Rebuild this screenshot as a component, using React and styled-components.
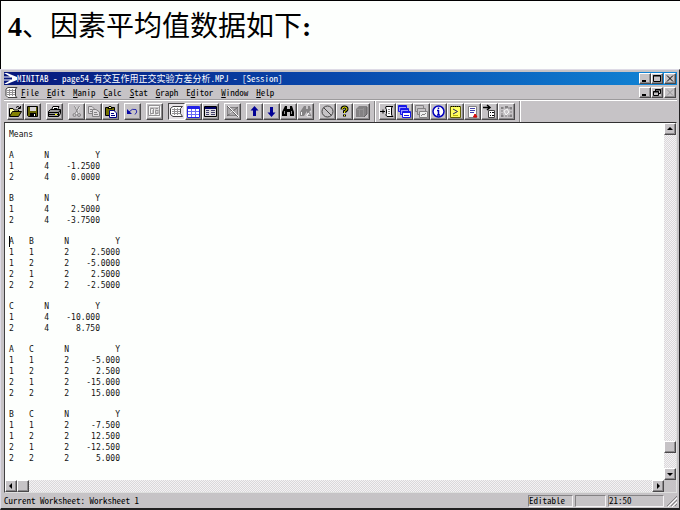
import React from "react";
import styled, { createGlobalStyle, css } from "styled-components";

const GlobalStyle = createGlobalStyle`
    * {
        box-sizing: border-box;
    }
    body {
        margin: 0;
        background: #fdfffd;
    }
    button {
        font: inherit;
        color: inherit;
        padding: 0;
        border: 0;
        background: none;
    }
`;

const raised = css`
    border: 1px solid;
    border-color: #fff #4a484a #4a484a #fff;
    box-shadow: inset -1px -1px 0 #8c8a8c;
`;

const sunken = css`
    border: 1px solid;
    border-color: #848284 #f4f2f4 #f4f2f4 #848284;
`;

// Page and heading styles
const Page = styled.div`
    display: flex;
    flex-direction: column;
    min-height: 100vh;
    border-top: 1px solid #000;
`;

const Heading = styled.h1`
    margin: 0;
    height: 68px;
    padding: 8px 7px;
    border-left: 1px solid #000;
    font-family: "Liberation Serif", "Noto Sans CJK SC", serif;
    font-size: 28px;
    font-weight: 400;
    line-height: 36px;
    color: #000;
    white-space: nowrap;
`;

// Window styles
const Window = styled.div`
    flex: 1;
    display: flex;
    flex-direction: column;
    padding: 2px 2px 1px 3px;
    background: #c6c3c6;
    border: 1px solid;
    border-color: #dedbe6 #212021 #212021 #dedbe6;
    border-bottom-width: 2px;
    font-family: "Noto Sans CJK SC", sans-serif;
    font-feature-settings: "hwid";
    font-size: 9px;
    line-height: 12px;
    color: #000;
`;

const TitleBar = styled.header`
    display: flex;
    align-items: center;
    height: 13px;
    padding-right: 1px;
    background: linear-gradient(90deg, #08187b, #0849ad 50%, #1086d6);
    color: #fff;
`;

const TitleText = styled.span`
    flex: 1;
    white-space: nowrap;
`;

const Controls = styled.div`
    display: flex;
    margin-left: auto;
`;

const ControlButton = styled.button`
    ${raised}
    display: flex;
    width: 12px;
    height: 11px;
    background: #c6c3c6;
    &:last-child {
        margin-left: 1px;
    }
`;

const MenuBar = styled.nav`
    display: flex;
    align-items: center;
    height: 15px;
    padding-right: 1px;
    padding-left: 1px;
`;

const MenuItem = styled.button`
    margin-left: 8px;
    &:first-of-type {
        margin-left: 3px;
    }
`;

const ToolBar = styled.div`
    display: flex;
    height: 22px;
    padding: 2px 0 0 3px;
    border-top: 1px solid #fff;
    box-shadow: 0 -1px 0 #9c9a9c;
`;

const ToolGroup = styled.div`
    display: flex;
    margin-right: 5px;
`;

const ToolButton = styled.button`
    ${raised}
    display: flex;
    width: 17px;
    height: 17px;
    background: ${({ $pressed }) => ($pressed ? "#e7e3e7" : "#c6c3c6")};
    ${({ $pressed }) => $pressed && css`
        border-color: #4a484a #fff #fff #4a484a;
        box-shadow: none;
    `}
`;

const Divider = styled.span`
    width: 2px;
    margin: -2px 3px 0 -1px;
    border-left: 1px solid #848284;
    border-right: 1px solid #fff;
`;

// Session styles
const Client = styled.div`
    flex: 1;
    display: grid;
    grid-template-columns: 1fr 12px;
    grid-template-rows: 1fr 12px;
    border: 1px solid;
    border-color: #313031 #dedfde #dedfde #424142;
`;

const Session = styled.main`
    padding: 6px 4px 0;
    background: #fdfffd;
    font-family: "DejaVu Sans Mono", monospace;
    font-feature-settings: normal;
    font-size: 8px;
    line-height: 11px;
    color: #101010;
`;

const SessionTitle = styled.h2`
    margin: 0;
    font-size: inherit;
    font-weight: 400;
`;

const MeansTable = styled.table`
    position: relative;
    margin-top: 10px;
    border-collapse: collapse;
    table-layout: fixed;
    width: ${({ $factors }) => $factors * 20 + 71}px;
`;

const Cell = styled.td`
    width: ${({ $wide }) => ($wide ? 51 : 20)}px;
    height: 11px;
    padding: 0;
    font-weight: 400;
    text-align: ${({ $right }) => ($right ? "right" : "left")};
`;

const Caret = styled.span`
    position: absolute;
    top: 0;
    left: 0;
    width: 1px;
    height: 11px;
    background: #000;
`;

// Scroll bar styles
const ScrollBar = styled.div`
    display: flex;
    flex-direction: ${({ $vertical }) => ($vertical ? "column" : "row")};
    background: repeating-conic-gradient(#f4f2f4 0 25%, #dad8da 0 50%) 0 0 / 2px 2px;
`;

const ScrollButton = styled.button`
    ${raised}
    display: flex;
    width: 12px;
    height: 12px;
    background: #c6c3c6;
`;

const Thumb = styled.div`
    ${raised}
    width: 12px;
    height: 12px;
    background: #c6c3c6;
`;

const Track = styled.div`
    flex: ${({ $grow }) => $grow};
`;

const StatusBar = styled.footer`
    display: flex;
    align-items: center;
    height: 14px;
    padding-top: 1px;
`;

const StatusText = styled.span`
    flex: 1;
`;

const StatusPanel = styled.span`
    ${sunken}
    width: ${({ $width }) => $width}px;
    height: 12px;
    margin-right: 2px;
    line-height: 10px;
`;

// Icons, drawn on a 15px grid
const Svg = styled.svg`
    display: block;
    flex: none;
`;

const Icon = ({ children, w = 15, h = 15 }) => (
    <Svg width={w} height={h} viewBox={`0 0 ${w} ${h}`} fill="none" stroke="#000" aria-hidden="true">
        {children}
    </Svg>
);

const icons = {
    open: (
        <Icon>
            <path d="M1.5 12V4.5H5L6 6H10.5V7.5" fill="#ffff9c" />
            <path d="M1.5 12.5L4.5 7.5H13.5L10.5 12.5Z" fill="#848200" />
            <path d="M8 3.5Q10 1 12 4M12.5 2V4.5H10" />
        </Icon>
    ),
    save: (
        <Icon>
            <path d="M2.5 2.5H12.5V12.5H3.5L2.5 11.5Z" fill="#636100" />
            <path d="M5 3H11V7H5Z" fill="#d6d3d6" stroke="none" />
            <path d="M5 9H11V13H5Z" fill="#000" stroke="none" />
            <path d="M9 10H10V12H9Z" fill="#fff" stroke="none" />
        </Icon>
    ),
    print: (
        <Icon>
            <path d="M4.5 6L6 2.5H12L10.5 6" fill="#fff" />
            <path d="M1.5 7.5L3.5 5.5H13.5V9.5L11.5 12.5H1.5Z" fill="#9c9a9c" />
            <path d="M2 8.5H11.5L13.5 6M11.5 8.5V12M2 10.5H11M7 4.5H10" />
            <path d="M8 10H10V11H8Z" fill="#ffff00" stroke="none" />
        </Icon>
    ),
    cut: (
        <Icon>
            <path d="M6 2L10 10M11 2L7 10" stroke="#fff" />
            <path d="M5.5 2L9 9M10.5 2L6.5 9" stroke="#848284" />
            <circle cx="5.5" cy="11" r="1.5" stroke="#848284" />
            <circle cx="10" cy="11" r="1.5" stroke="#848284" />
        </Icon>
    ),
    copy: (
        <Icon>
            <path d="M2.5 2.5H6L8.5 5V9.5H2.5Z" fill="#dedbde" stroke="#848284" />
            <path d="M6.5 5.5H10L13.5 8V12.5H6.5Z" fill="#dedbde" stroke="#848284" />
            <path d="M4 5.5H6M4 7.5H6M8 8.5H11M8 10.5H12" stroke="#848284" />
        </Icon>
    ),
    paste: (
        <Icon>
            <path d="M2.5 3.5H11.5V11.5H2.5Z" fill="#737100" />
            <path d="M5 4.5L6 2.5H8L9 4.5Z" fill="#ffff9c" />
            <path d="M6.5 6.5H11L13.5 9V13.5H6.5Z" fill="#fff" stroke="#000084" />
            <path d="M8 9.5H11M8 11.5H12" stroke="#000084" />
        </Icon>
    ),
    undo: (
        <Icon>
            <path d="M4 8Q7 4 11 5.5Q13 8 10 10.5" stroke="#2929ad" />
            <path d="M2 5V10H7Z" fill="#0808a5" stroke="none" />
        </Icon>
    ),
    dialog: (
        <Icon>
            <path d="M2.5 2.5H13.5V12.5H2.5ZM4.5 5.5H7.5V10.5H4.5ZM9.5 5H12M9.5 7.5H12V10.5H9.5" stroke="#f7f7f7" />
            <path d="M1.5 1.5H12.5V11.5H1.5ZM3.5 4.5H6.5V9.5H3.5ZM8.5 4.5H11M8.5 6.5H11V9.5H8.5Z" stroke="#949294" />
        </Icon>
    ),
    session: (
        <Icon>
            <path d="M4 2.5H13.5L11.5 4.5V9.5L13.5 12.5H4L1.5 10.5V4.5Z" fill="#fff" stroke="#424142" />
            <path d="M5.5 4V11M8.5 4V11M3 5.5H11M3 7.5H11M3 9.5H11" stroke="#949294" />
        </Icon>
    ),
    worksheet: (
        <Icon>
            <path d="M1.5 2.5H13.5V13.5H1.5Z" fill="#fff" stroke="#2121e7" />
            <path d="M2 3H13V5H2Z" fill="#2121e7" stroke="none" />
            <path d="M5.5 5V13M9.5 5V13M2 7.5H13M2 10.5H13" stroke="#6b6bf7" />
        </Icon>
    ),
    projectTable: (
        <Icon>
            <path d="M1.5 2.5H13.5V12.5H1.5Z" fill="#dedbde" />
            <path d="M2 3H13V5H2Z" fill="#000063" stroke="none" />
            <path d="M3 6.5H6M8 6.5H12M3 8.5H6M8 8.5H12M3 10.5H6M8 10.5H12" stroke="#42416b" />
        </Icon>
    ),
    closeGraphs: (
        <Icon>
            <path d="M2.5 3.5H12.5V11.5H2.5Z" fill="#adaaad" stroke="#848284" />
            <path d="M2 2L13 13M13 3L2 12" stroke="#636163" />
            <path d="M3 2L14 13M5 9.5L8 6" stroke="#fff" />
        </Icon>
    ),
    up: <Icon><path d="M7.5 2L11.5 6.5H9V12H6V6.5H3.5Z" fill="#000094" stroke="none" /></Icon>,
    down: <Icon><path d="M7.5 13L11.5 8.5H9V3H6V8.5H3.5Z" fill="#000094" stroke="none" /></Icon>,
    find: (
        <Icon>
            <path d="M4 2H6V5H9V2H11L13 8V12H9V8H6V12H1V8Z" fill="#000" stroke="none" />
            <path d="M3.5 7V10M10.5 7V10" stroke="#949294" />
        </Icon>
    ),
    replace: (
        <Icon>
            <path d="M6 2H8V5H10V2H12L13 6L10 9H9V7L6 12H2V8Z" fill="#848284" stroke="none" />
            <path d="M3.5 8V11M8.5 11.5L12.5 7.5M9 12H12" stroke="#f7f7f7" />
            <path d="M11 8L13 12M10 11.5H13" stroke="#848284" />
        </Icon>
    ),
    cancel: (
        <Icon>
            <circle cx="7.5" cy="7.5" r="5.5" stroke="#424142" />
            <path d="M3.5 3.5L11.5 11.5" stroke="#424142" />
        </Icon>
    ),
    help: (
        <Icon>
            <path d="M5 5.5Q5 3 7.5 3Q10 3 10 5Q10 6.5 7.5 7.5V9M7.5 10.5V12.5" strokeWidth="3" />
            <path d="M5 5.5Q5 3 7.5 3Q10 3 10 5Q10 6.5 7.5 7.5V9M7.5 11V12" stroke="#f7f700" />
        </Icon>
    ),
    guide: (
        <Icon>
            <path d="M2 5L5 2H13V10L10 13H2Z" fill="#848284" stroke="none" />
            <path d="M5.5 5V12M9.5 4V12M3 5.5H10" stroke="#949294" />
            <path d="M13 3V10L10 13" stroke="#636163" />
        </Icon>
    ),
    sessionFolder: (
        <Icon>
            <path d="M0 7.5H5M3 5.5V9.5" />
            <path d="M6 2.5H13Q11 3 11.5 5V9Q11 11.5 13 12.5H7Q5 11 6.5 9.5V5.5Q5 4 6 2.5Z" fill="#fff" />
            <path d="M8 5.5H10M8 7.5H10M8 9.5H10" stroke="#848284" />
        </Icon>
    ),
    worksheets: (
        <Icon>
            <path d="M1.5 1.5H9.5V7.5H1.5Z" fill="#9c9aff" stroke="#1818e7" />
            <path d="M3.5 4.5H11.5V10.5H3.5Z" fill="#9c9aff" stroke="#1818e7" />
            <path d="M5.5 7.5H13.5V13.5H5.5Z" fill="#fff" stroke="#1818e7" />
            <path d="M2 2.5H9M4 5.5H11M6 8.5H13M7 11.5H12" stroke="#1818e7" />
        </Icon>
    ),
    graphs: (
        <Icon>
            <path d="M1.5 1.5H9.5V7.5H1.5Z" fill="#c6c3c6" stroke="#848284" />
            <path d="M3.5 4.5H11.5V10.5H3.5Z" fill="#c6c3c6" stroke="#848284" />
            <path d="M5.5 7.5H13.5V13.5H5.5Z" fill="#efefef" stroke="#848284" />
            <path d="M7 12L9 10L10 11L12 9" stroke="#848284" />
        </Icon>
    ),
    info: (
        <Icon>
            <circle cx="7.5" cy="7.5" r="5.5" fill="#fff" stroke="#0000bd" strokeWidth="1.5" />
            <path d="M7.5 3.5V5M7.5 6V11M6 6.5H8M6 11H9" stroke="#0000bd" strokeWidth="1.5" />
        </Icon>
    ),
    history: (
        <Icon>
            <path d="M2.5 2.5H12.5V13.5H2.5Z" fill="#ffff63" stroke="#636100" />
            <path d="M3 2.5H13" strokeDasharray="1 1" />
            <path d="M5 5L9.5 7.5L5 10" stroke="#212063" />
            <path d="M5 11.5H10" stroke="#bdba00" />
        </Icon>
    ),
    report: (
        <Icon>
            <path d="M3.5 2.5H11.5V13.5H3.5Z" fill="#fff" stroke="#848284" />
            <path d="M5 4.5H10M5 6.5H10M5 8.5H9" stroke="#4241ad" />
            <path d="M8.5 13L10 10L12 13Z" fill="#e71010" stroke="#d60000" />
        </Icon>
    ),
    related: (
        <Icon>
            <path d="M1 3.5H7M5 1L8 3.5L5 6" strokeWidth="1.5" />
            <path d="M6.5 6.5H12.5V13.5H6.5Z" fill="#fff" stroke="#424142" />
            <path d="M8 8.5H9M10 8.5H12M8 11.5H9M10 11.5H12" />
        </Icon>
    ),
    design: (
        <Icon>
            <path d="M3 4H12V12H3Z" stroke="#848284" strokeDasharray="2 1" />
            <path d="M2 3H4V5H2ZM11 3H13V5H11ZM2 11H4V13H2ZM11 11H13V13H11ZM6 2H9V4H6Z" fill="#848284" stroke="none" />
            <path d="M5 7L8 5L10 8L7 11Z" stroke="#f7f7f7" />
        </Icon>
    ),
};

const controlIcons = {
    Minimize: <path d="M2 7H6" strokeWidth="2" />,
    Maximize: <path d="M1.5 1.5H8.5V7.5H1.5ZM1 2H9" />,
    Restore: <path d="M3.5 3V1.5H8.5V5.5H7M1.5 3.5H6.5V7.5H1.5ZM1 4H7M3 2H9" />,
    Close: <path d="M2 1.5L8 7.5M8 1.5L2 7.5" />,
};

const arrows = {
    up: "M5 3L8 6H2Z",
    down: "M5 7L8 4H2Z",
    left: "M3 5L6 2V8Z",
    right: "M7 5L4 2V8Z",
};

const toolGroups = [
    [["open", "Open"], ["save", "Save"]],
    [["print", "Print"]],
    [["cut", "Cut"], ["copy", "Copy"], ["paste", "Paste"]],
    [["undo", "Undo"]],
    [["dialog", "Edit last dialog"]],
    [["session", "Session window"], ["worksheet", "Data window"], ["projectTable", "Project manager"]],
    [["closeGraphs", "Close all graphs"]],
    [["up", "Previous command"], ["down", "Next command"], ["find", "Find"], ["replace", "Replace"]],
    [["cancel", "Cancel"], ["help", "Help"], ["guide", "StatGuide"]],
];

const projectTools = [
    ["sessionFolder", "Show session folder"],
    ["worksheets", "Show worksheets folder"],
    ["graphs", "Show graphs folder"],
    ["info", "Show info"],
    ["history", "Show history"],
    ["report", "Show report pad"],
    ["related", "Show related documents"],
    ["design", "Show design"],
];

// Menu labels, split around the underlined letter
const menus = [
    ["", "F", "ile"],
    ["", "E", "dit"],
    ["", "M", "anip"],
    ["", "C", "alc"],
    ["", "S", "tat"],
    ["", "G", "raph"],
    ["E", "d", "itor"],
    ["", "W", "indow"],
    ["", "H", "elp"],
];

const means = [
    { factors: ["A"], rows: [["1", "4", "-1.2500"], ["2", "4", "0.0000"]] },
    { factors: ["B"], rows: [["1", "4", "2.5000"], ["2", "4", "-3.7500"]] },
    {
        factors: ["A", "B"],
        caret: true,
        rows: [["1", "1", "2", "2.5000"], ["1", "2", "2", "-5.0000"], ["2", "1", "2", "2.5000"], ["2", "2", "2", "-2.5000"]],
    },
    { factors: ["C"], rows: [["1", "4", "-10.000"], ["2", "4", "8.750"]] },
    {
        factors: ["A", "C"],
        rows: [["1", "1", "2", "-5.000"], ["1", "2", "2", "2.500"], ["2", "1", "2", "-15.000"], ["2", "2", "2", "15.000"]],
    },
    {
        factors: ["B", "C"],
        rows: [["1", "1", "2", "-7.500"], ["1", "2", "2", "12.500"], ["2", "1", "2", "-12.500"], ["2", "2", "2", "5.000"]],
    },
];

const WindowControls = ({ middle, disabledClose, scope }) => (
    <Controls>
        {["Minimize", middle, "Close"].map(name => (
            <ControlButton key={name} aria-label={`${name} ${scope}`} disabled={name === "Close" && disabledClose}>
                <Svg
                    width="10"
                    height="9"
                    viewBox="0 0 10 9"
                    fill="none"
                    stroke={name === "Close" && disabledClose ? "#949294" : "#000"}
                >
                    {controlIcons[name]}
                </Svg>
            </ControlButton>
        ))}
    </Controls>
);

const Tools = ({ items }) => (
    <ToolGroup>
        {items.map(([icon, label]) => (
            <ToolButton key={icon} title={label} aria-label={label} $pressed={icon === "session"}>
                {icons[icon]}
            </ToolButton>
        ))}
    </ToolGroup>
);

const Arrow = ({ to }) => (
    <ScrollButton aria-label={`Scroll ${to}`}>
        <Svg width="10" height="10" viewBox="0 0 10 10">
            <path d={arrows[to]} />
        </Svg>
    </ScrollButton>
);

const Means = ({ factors, rows, caret }) => (
    <MeansTable $factors={factors.length}>
        <thead>
            <tr>
                {factors.map((factor, i) => (
                    <Cell as="th" scope="col" key={factor}>
                        {caret && i === 0 && <Caret />}
                        {factor}
                    </Cell>
                ))}
                <Cell as="th" scope="col" $right>N</Cell>
                <Cell as="th" scope="col" $right $wide>Y</Cell>
            </tr>
        </thead>
        <tbody>
            {rows.map(row => (
                <tr key={row.join()}>
                    {row.map((value, i) => (
                        <Cell key={i} $right={i >= factors.length} $wide={i > factors.length}>{value}</Cell>
                    ))}
                </tr>
            ))}
        </tbody>
    </MeansTable>
);

const App = () => (
    <Page>
        <GlobalStyle />
        <Heading><b>4</b>、因素平均值数据如下<b>:</b></Heading>
        <Window>
            <TitleBar>
                <Icon w={13} h={13}>
                    <path d="M0 1H3L13 5V8L3 12H0L6 8.5H0V7.5H8V5.5H0V4.5H6Z" fill="#fff" stroke="none" />
                </Icon>
                <TitleText>MINITAB - page54_有交互作用正交实验方差分析.MPJ - [Session]</TitleText>
                <WindowControls middle="Maximize" scope="window" />
            </TitleBar>
            <MenuBar>
                <Icon w={13} h={13}>
                    <path d="M3 1.5H12L10.5 3V10L12 11.5H3L1 9.5V3Z" fill="#fff" stroke="#424142" />
                    <path d="M4.5 3V10M7.5 3V10M2 4.5H10M2 6.5H10M2 8.5H10" stroke="#949294" />
                </Icon>
                {menus.map(([before, letter, after]) => (
                    <MenuItem key={letter}>{before}<u>{letter}</u>{after}</MenuItem>
                ))}
                <WindowControls middle="Restore" scope="session" disabledClose />
            </MenuBar>
            <ToolBar>
                {toolGroups.map(items => <Tools key={items[0][0]} items={items} />)}
                <Divider />
                <Tools items={projectTools} />
                <Divider />
            </ToolBar>
            <Client>
                <Session>
                    <SessionTitle>Means</SessionTitle>
                    {means.map((table, i) => <Means key={i} {...table} />)}
                </Session>
                <ScrollBar $vertical>
                    <Arrow to="up" />
                    <Track $grow={306} />
                    <Thumb />
                    <Track $grow={15} />
                    <Arrow to="down" />
                </ScrollBar>
                <ScrollBar>
                    <Arrow to="left" />
                    <Thumb />
                    <Track $grow={1} />
                    <Arrow to="right" />
                </ScrollBar>
            </Client>
            <StatusBar>
                <StatusText>Current Worksheet: Worksheet 1</StatusText>
                <StatusPanel $width={45}>Editable</StatusPanel>
                <StatusPanel $width={31} />
                <StatusPanel $width={56}>21:50</StatusPanel>
                <Icon w={11} h={13}>
                    <path d="M1 12L11 2M5 12L11 6M9 12L11 10" stroke="#848284" />
                    <path d="M2 13L11 4M6 13L11 8" stroke="#fff" />
                </Icon>
            </StatusBar>
        </Window>
    </Page>
);

export default App;
